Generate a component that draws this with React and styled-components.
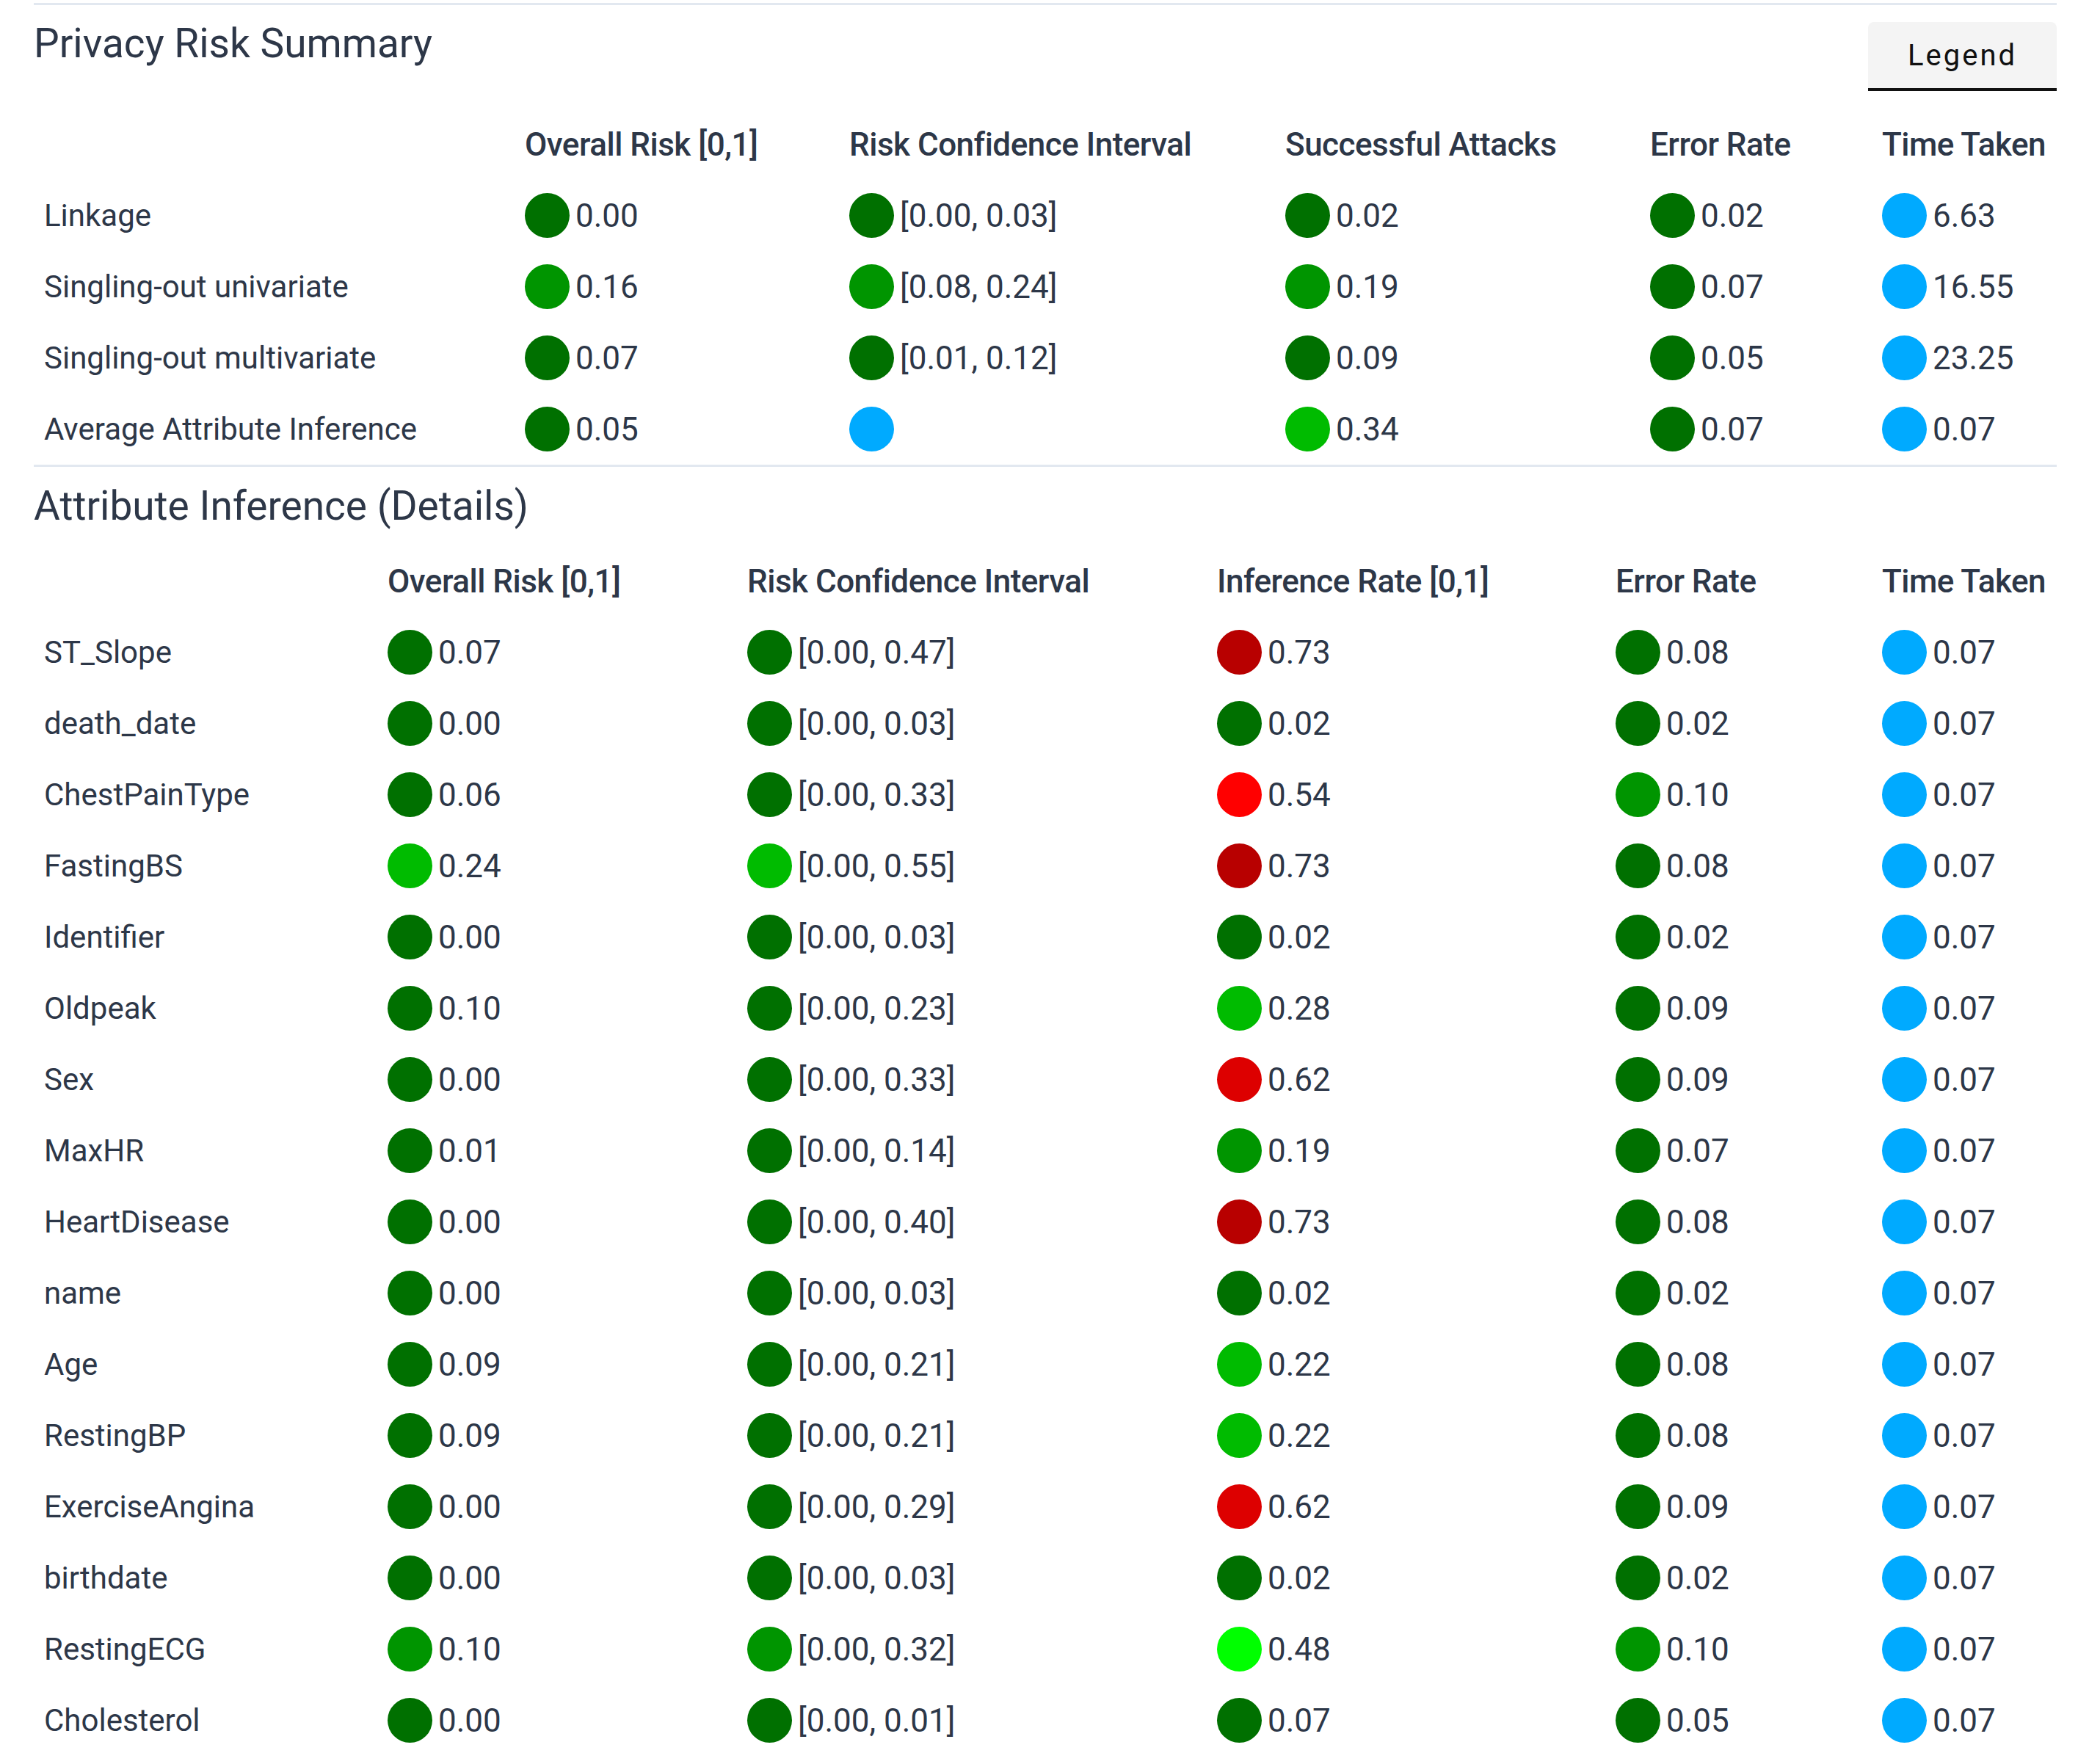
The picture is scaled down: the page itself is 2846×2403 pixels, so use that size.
import React from "react";
import styled, { createGlobalStyle } from "styled-components";

const Global = createGlobalStyle`
  body { margin: 0; background: #fff; font-family: Roboto, "Liberation Sans", sans-serif; color: #2d3748; }
`;

const Page = styled.div`
  width: 2756px;
  margin-left: 46px;
  padding-top: 4px;
`;
const Section = styled.section`
  border-top: 3px solid #e2e8f0;
`;
const HeadRow = styled.div`
  display: flex;
  justify-content: space-between;
  align-items: flex-start;
`;
const Title = styled.h2`
  margin: ${(p) => p.$top}px 0 0 0;
  font-size: 55px;
  line-height: 70px;
  font-weight: 400;
  color: #2d3748;
`;
const LegendBtn = styled.button`
  margin-top: 23px;
  width: 257px;
  height: 94px;
  background: #f4f4f4;
  border: none;
  border-bottom: 4px solid #111;
  border-radius: 8px 8px 0 0;
  font-family: Roboto, "Liberation Sans", sans-serif;
  font-size: 40px;
  letter-spacing: 3px;
  color: #111;
`;
const Grid = styled.div`
  display: grid;
  grid-template-columns: ${(p) => p.$cols};
  margin-top: ${(p) => p.$top}px;
`;
const HCell = styled.div`
  height: 60px;
  line-height: 60px;
  margin-bottom: 18px;
  font-size: 44px;
  font-weight: 500;
  white-space: nowrap;
  letter-spacing: -0.5px;
`;
const Label = styled.div`
  height: 97px;
  display: flex;
  align-items: center;
  padding-left: 14px;
  font-size: 42px;
  white-space: nowrap;
`;
const Cell = styled.div`
  height: 97px;
  display: flex;
  align-items: center;
  gap: 8px;
  font-size: 44px;
  white-space: nowrap;
`;
const Dot = styled.span`
  width: 61px;
  height: 61px;
  border-radius: 50%;
  background: ${(p) => p.$c};
  flex: none;
`;

const C = { d: "#007000", m: "#009500", b: "#00bb00", l: "#00ff00", r: "#ff0000", R: "#b80000", q: "#dd0000", u: "#00aaff" };

const sum = [
  ["Linkage", ["d", "0.00"], ["d", "[0.00, 0.03]"], ["d", "0.02"], ["d", "0.02"], ["u", "6.63"]],
  ["Singling-out univariate", ["m", "0.16"], ["m", "[0.08, 0.24]"], ["m", "0.19"], ["d", "0.07"], ["u", "16.55"]],
  ["Singling-out multivariate", ["d", "0.07"], ["d", "[0.01, 0.12]"], ["d", "0.09"], ["d", "0.05"], ["u", "23.25"]],
  ["Average Attribute Inference", ["d", "0.05"], ["u", ""], ["b", "0.34"], ["d", "0.07"], ["u", "0.07"]],
];

const det = [
  ["ST_Slope", "d0.07", "d[0.00, 0.47]", "R0.73", "d0.08"],
  ["death_date", "d0.00", "d[0.00, 0.03]", "d0.02", "d0.02"],
  ["ChestPainType", "d0.06", "d[0.00, 0.33]", "r0.54", "m0.10"],
  ["FastingBS", "b0.24", "b[0.00, 0.55]", "R0.73", "d0.08"],
  ["Identifier", "d0.00", "d[0.00, 0.03]", "d0.02", "d0.02"],
  ["Oldpeak", "d0.10", "d[0.00, 0.23]", "b0.28", "d0.09"],
  ["Sex", "d0.00", "d[0.00, 0.33]", "q0.62", "d0.09"],
  ["MaxHR", "d0.01", "d[0.00, 0.14]", "m0.19", "d0.07"],
  ["HeartDisease", "d0.00", "d[0.00, 0.40]", "R0.73", "d0.08"],
  ["name", "d0.00", "d[0.00, 0.03]", "d0.02", "d0.02"],
  ["Age", "d0.09", "d[0.00, 0.21]", "b0.22", "d0.08"],
  ["RestingBP", "d0.09", "d[0.00, 0.21]", "b0.22", "d0.08"],
  ["ExerciseAngina", "d0.00", "d[0.00, 0.29]", "q0.62", "d0.09"],
  ["birthdate", "d0.00", "d[0.00, 0.03]", "d0.02", "d0.02"],
  ["RestingECG", "m0.10", "m[0.00, 0.32]", "l0.48", "m0.10"],
  ["Cholesterol", "d0.00", "d[0.00, 0.01]", "d0.07", "d0.05"],
];

const V = ({ c, t }) => (
  <Cell>
    <Dot $c={C[c]} />
    {t}
  </Cell>
);

export default function App() {
  const h1 = ["", "Overall Risk [0,1]", "Risk Confidence Interval", "Successful Attacks", "Error Rate", "Time Taken"];
  const h2 = ["", "Overall Risk [0,1]", "Risk Confidence Interval", "Inference Rate [0,1]", "Error Rate", "Time Taken"];
  return (
    <Page>
      <Global />
      <Section>
        <HeadRow>
          <Title $top={17}>Privacy Risk Summary</Title>
          <LegendBtn>Legend</LegendBtn>
        </HeadRow>
        <Grid $top={43} $cols="669px 442px 594px 497px 316px 1fr">
          {h1.map((h, i) => <HCell key={i}>{h}</HCell>)}
          {sum.map((r) => (
            <React.Fragment key={r[0]}>
              <Label>{r[0]}</Label>
              {r.slice(1).map((v, i) => <V key={i} c={v[0]} t={v[1]} />)}
            </React.Fragment>
          ))}
        </Grid>
      </Section>
      <Section>
        <Title $top={18}>Attribute Inference (Details)</Title>
        <Grid $top={38} $cols="482px 490px 640px 543px 363px 1fr">
          {h2.map((h, i) => <HCell key={i}>{h}</HCell>)}
          {det.map((r) => (
            <React.Fragment key={r[0]}>
              <Label>{r[0]}</Label>
              {r.slice(1).map((v, i) => <V key={i} c={v[0]} t={v.slice(1)} />)}
              <V c="u" t="0.07" />
            </React.Fragment>
          ))}
        </Grid>
      </Section>
    </Page>
  );
}
